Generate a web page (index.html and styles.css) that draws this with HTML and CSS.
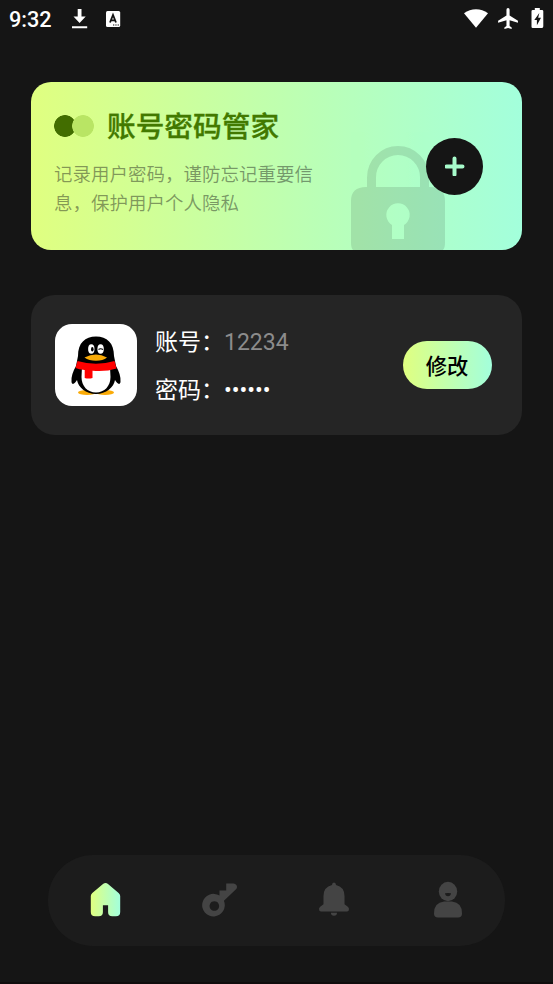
FILE: index.html
```
<!DOCTYPE html>
<html lang="zh-CN">
<head>
<meta charset="utf-8">
<title>账号密码管家</title>
<link rel="stylesheet" href="styles.css">
</head>
<body>
<header class="status">
  <span class="time">9:32</span>
  <svg class="download" width="18" height="22" viewBox="0 0 18 22"><path d="M6.700 1h3.800v7.500h4.200L8.600 15 2.500 8.500h4.200zM1 18.200h15.200v2H1z" fill="#fff"/></svg>
  <svg class="keyboard" width="16" height="18" viewBox="0 0 16 18"><rect x="1" y="1" width="14.200" height="16" rx="1.500" fill="#fff"/><path d="M5 12.500 8 5l3 7.500M6 10.300h4" fill="none" stroke="#151515" stroke-width="1.800"/><path d="M8 15h1.300M10.300 15h1.300M12.600 15h1.300" stroke="#151515" stroke-width="1.200"/></svg>
  <span class="spacer"></span>
  <svg class="wifi" width="24" height="20" viewBox="0 0 24 20"><path d="M0 4.200Q5.500.2 12 .2T24 4.200L12 18.800z" fill="#fff"/></svg>
  <svg class="plane" width="22" height="22" viewBox="2 2 20 20"><path d="M21 16v-2l-8-5V3.500a1.500 1.500 0 0 0-3 0V9l-8 5v2l8-2.500V19l-2 1.500V22l3.500-1 3.500 1v-1.500L13 19v-5.500z" fill="#fff" transform="translate(1.100 .2) scale(.95)"/></svg>
  <svg class="battery" width="13" height="20" viewBox="0 0 13 20"><path d="M3.800 0h5v2H11q1.300 0 1.300 1.300v15Q12.300 20 11 20H1.800Q.5 20 .5 18.700V3.300Q.5 2 1.800 2h2z" fill="#fff"/><path d="M8.300 5 3.300 12h2.600v5.200L10 9.800H7.200z" fill="#151515"/></svg>
</header>

<main>
  <section class="hero">
    <svg class="lock" width="94" height="104" viewBox="0 0 94 104"><path d="M20.500 41V31.500a26.500 27 0 0 1 53 0V41" fill="none" stroke="currentColor" stroke-width="9"/><path fill-rule="evenodd" d="M15 41h64q15 0 15 14v42q0 5-2 7H2q-2-2-2-7V55Q0 41 15 41zM41 79v14h12V79a11.700 11.700 0 1 0-12 0z" fill="currentColor"/></svg>
    <div class="copy">
      <div class="heading"><i class="dots"></i><h1>账号密码管家</h1></div>
      <p>记录用户密码，谨防忘记重要信息，保护用户个人隐私</p>
    </div>
    <button class="add" aria-label="添加"><svg width="20" height="20" viewBox="0 0 20 20"><path d="M9.500 2.500v16M1.500 10.500h16" stroke="#a7fbcb" stroke-width="4" stroke-linecap="round"/></svg></button>
  </section>

  <section class="account">
    <svg class="avatar" width="82" height="82" viewBox="0 0 82 82">
      <rect width="82" height="82" rx="17" fill="#fff"/>
      <ellipse cx="32" cy="68.500" rx="9" ry="2.400" fill="#faab07"/><ellipse cx="50" cy="68.500" rx="9" ry="2.400" fill="#faab07"/>
      <path d="M23 32C23 19 30 12.500 41 12.500S59 19 59 32l2 10c3 5 5 11 4.500 16-1 4-3.500 1-5.500-2-1 7-9 14-19 14s-18-7-19-14c-2 3-4.500 6-5.500 2-.5-5 1.500-11 4.500-16z" fill="#000"/>
      <path d="M27 43q14 5 28 0l.5 10c0 9-6 15.500-14.500 15.500S26.500 62 26.500 53z" fill="#fff"/>
      <path d="M22.500 37q18.500 5.500 37 0l2 7.500Q51 48 37.500 46.800V54q-4 1-7.800 0v-8Q24 45.500 20.500 44z" fill="#f00"/>
      <ellipse cx="36.300" cy="25" rx="3.200" ry="4.800" fill="#fff"/><ellipse cx="45.600" cy="25" rx="3.200" ry="4.800" fill="#fff"/>
      <ellipse cx="37.300" cy="25.300" rx="1.300" ry="2.200" fill="#000"/><path d="M43.500 25.500q2-1.500 4.500 0" fill="none" stroke="#000" stroke-width="1.200"/>
      <path d="M29.500 33.500Q41 27.500 52 33.500q-4 3.200-11 3.200t-11.500-3.200z" fill="#faab07"/>
    </svg>
    <div class="fields">
      <div class="field"><span>账号：</span><span class="number">12234</span></div>
      <div class="field"><span>密码：</span><span class="masked">••••••</span></div>
    </div>
    <button class="edit">修改</button>
  </section>
</main>

<nav>
  <a><svg width="36" height="38" viewBox="0 0 36 38"><defs><linearGradient id="g"><stop stop-color="#e0ff80"/><stop offset="1" stop-color="#a3ffdc"/></linearGradient></defs><path transform="translate(.5)" d="M15.500 2q2.700-2 5 0l10.600 9Q32.700 12.500 32.700 14v16q0 4.300-4.300 4.300h-3.600q-4.200 0-4.200-4V23.200h-5.200v7.100q0 4-4.200 4H7.600q-4.300 0-4.300-4.300V14q0-1.500 1.500-3z" fill="url(#g)"/></svg></a>
  <a><svg width="38" height="38" viewBox="0 0 38 38"><path transform="translate(.5)" fill-rule="evenodd" d="M25.700 1.500h7.300q3.500.5 3.500 3.500 0 1.300-1 2.300L23.400 18.800A11.300 11.300 0 1 1 19 13.600V8.500h6.700zM13.800 19.200a4.800 4.800 0 1 0 .1 0z" fill="currentColor"/></svg></a>
  <a><svg width="34" height="38" viewBox="0 0 34 38"><path d="M15 3Q15 .5 17 .5T19 3q8.500 2 8.500 11v8.300l3 2.200q1.500 1 1.500 2.500 0 2.500-2 2.500H4q-2 0-2-2.500 0-1.500 1.500-2.500l3-2.200V14q0-9 8.500-11zM13.900 30.800H20q0 3-3 3t-3.100-3z" fill="currentColor"/></svg></a>
  <a><svg width="32" height="40" viewBox="0 0 32 40"><ellipse cx="16" cy="10.500" rx="9.200" ry="9.700" fill="currentColor"/><path d="M13 12.200q3-.6 6 0-.3 3-3 3t-3-3z" fill="#1c1c1c"/><path d="M12 20.500h8q10 1 10 12 0 4-4 4H6q-4 0-4-4 0-11 10-12z" fill="currentColor"/></svg></a>
</nav>
</body>
</html>
```
FILE: styles.css
```
* { box-sizing: border-box; }
body {
  margin: 0;
  height: 984px;
  display: flex;
  flex-direction: column;
  background: #151515;
  color: #fff;
  font-family: Roboto, "Noto Sans CJK SC", sans-serif;
  overflow: hidden;
  border-bottom: 2px solid #100c0d;
}
h1, p { margin: 0; }
button { border: 0; padding: 0; font-family: inherit; }
svg { display: block; flex: none; }

.status { height: 38px; display: flex; align-items: center; padding: 0 9px; }
.time { font-size: 21.700px; font-weight: 500; width: 62px; }
.keyboard { margin-left: 16px; }
.spacer { flex: 1; }
.wifi { margin-bottom: 1px; }
.plane { margin-left: 9px; }
.battery { margin: 0 0 2px 12px; }

main { flex: 1; padding: 44px 31px 0; }
.hero {
  position: relative;
  height: 168px;
  border-radius: 20px;
  overflow: hidden;
  display: flex;
  align-items: center;
  justify-content: space-between;
  padding: 0 39px 0 23px;
  background: linear-gradient(90deg, #e0ff80, #b9ffb8 60%, #a3ffdc);
}
.lock { position: absolute; left: 320px; bottom: 0; color: #151515; opacity: .12; }
.copy { width: 270px; align-self: flex-start; padding-top: 24px; }
.heading { display: flex; align-items: center; height: 40px; white-space: nowrap; }
.dots {
  width: 40px;
  height: 22px;
  margin-right: 13px;
  background:
    radial-gradient(circle at 29px 11px, #b9e564 10.500px, transparent 11.200px),
    radial-gradient(circle at 11px 11px, #426d00 10.500px, transparent 11.200px);
}
h1 {
  font-size: 28.700px;
  line-height: 40px;
  padding-top: 2px;
  font-weight: 500;
  color: #427900;
  -webkit-text-stroke: .3px #427900;
}
p { margin-top: 15px; font-size: 18.500px; line-height: 29px; font-weight: 400; color: #15151570; }
.add {
  position: relative;
  width: 57px;
  height: 57px;
  border-radius: 50%;
  background: #151515;
  display: grid;
  place-items: center;
}

.account {
  margin-top: 45px;
  height: 140px;
  border-radius: 24px;
  background: #252525;
  display: flex;
  align-items: center;
  padding: 0 30.500px 0 24px;
}
.fields { flex: 1; margin: 4px 0 0 18px; font-size: 23px; line-height: 34px; display: grid; gap: 14px; }
.field { display: flex; height: 34px; }
.number { color: #8c8c8c; }
.edit {
  width: 89px;
  height: 48px;
  padding-bottom: 2px;
  border-radius: 24px;
  color: #000;
  font-size: 21.300px;
  font-weight: 500;
  background: linear-gradient(90deg, #e0ff80, #a3ffdc);
}

nav {
  height: 91px;
  margin: 0 48px 36px;
  border-radius: 45px;
  background: #1c1c1c;
  color: #444;
  display: grid;
  grid-template-columns: repeat(4, 1fr);
  place-items: center;
}
```
